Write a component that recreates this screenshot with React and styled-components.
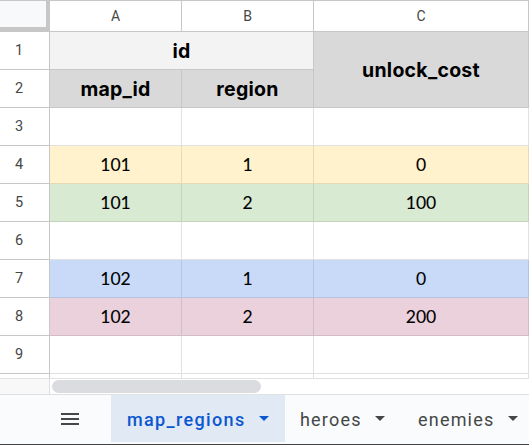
import React from "react";
import styled, { createGlobalStyle } from "styled-components";

const Global = createGlobalStyle`
  html, body {
    margin: 0;
    padding: 0;
    background: #fff;
    overflow: hidden;
  }
`;

const Page = styled.div`
  width: 529px;
  height: 445px;
  display: flex;
  flex-direction: column;
  overflow: hidden;
`;

const Grid = styled.div`
  display: grid;
  grid-template-columns: 50px 132px 132px 215px;
  grid-template-rows: 32px repeat(9, 38px) 4px;
  flex: none;
  border-bottom: 1px solid #e1e1e1;
`;

const Corner = styled.div`
  background: #f8f9fa;
  border-top: 1px solid #c7c7c7;
  border-right: 4px solid #c7c7c7;
  border-bottom: 5px solid #c7c7c7;
  box-sizing: border-box;
`;

const ColHead = styled.div`
  display: flex;
  align-items: center;
  justify-content: center;
  box-sizing: border-box;
  border-top: 1px solid #c7c7c7;
  border-right: 1px solid #c7c7c7;
  border-bottom: 1px solid #c7c7c7;
  font: 14px "Roboto", sans-serif;
  color: #444746;
  padding-bottom: 1px;
`;

const RowHead = styled.div`
  display: flex;
  align-items: center;
  justify-content: center;
  box-sizing: border-box;
  border-right: 1px solid #c7c7c7;
  border-bottom: 1px solid #c7c7c7;
  padding-right: 11px;
  font: 14.5px "Roboto", sans-serif;
  color: #444746;
`;

const Cell = styled.div`
  display: flex;
  align-items: center;
  justify-content: center;
  box-sizing: border-box;
  grid-row: ${(p) => p.$row || "auto"};
  grid-column: ${(p) => p.$col || "auto"};
  background: ${(p) => p.$bg || "#fff"};
  border-right: 1px solid ${(p) => p.$line || "#e1e1e1"};
  border-bottom: 1px solid ${(p) => p.$line || "#e1e1e1"};
  font-family: ${(p) => (p.$head ? '"Inter"' : '"Lato"')}, "Liberation Sans", sans-serif;
  font-size: ${(p) => (p.$head ? 19.5 : 17.5)}px;
  font-weight: ${(p) => (p.$head ? 700 : 400)};
  letter-spacing: ${(p) => (p.$head ? "0.25px" : "0")};
  -webkit-text-stroke: ${(p) => (p.$head ? "0" : "0.1px")} #000;
  color: #000;
`;

const Stub = styled.div`
  border-right: 1px solid ${(p) => (p.$first ? "#c7c7c7" : "#e1e1e1")};
  box-sizing: border-box;
`;

const ScrollStrip = styled.div`
  height: 15px;
  flex: none;
  display: flex;
  background: #fff;
`;

const ScrollCorner = styled.div`
  width: 50px;
  background: #f8f8f8;
  border-right: 1px solid #e1e1e1;
  box-sizing: border-box;
`;

const Thumb = styled.div`
  width: 209px;
  height: 13px;
  margin: 1px 0 0 2px;
  border-radius: 7px;
  background: #dadce0;
`;

const TabBar = styled.div`
  flex: 1;
  display: flex;
  background: #f9fbfd;
  border-top: 1px solid #e1e1e1;
  border-bottom: 1px solid #444;
  padding-bottom: 2px;
`;

const Menu = styled.div`
  width: 111px;
  flex: none;
  display: flex;
  align-items: center;
  padding-left: 61px;
  box-sizing: border-box;
`;

const Tab = styled.div`
  display: flex;
  align-items: center;
  flex: none;
  width: ${(p) => p.$w}px;
  padding-left: ${(p) => p.$pad}px;
  padding-top: 2px;
  box-sizing: border-box;
  background: ${(p) => (p.$active ? "#e1e9f5" : "transparent")};
  color: ${(p) => (p.$active ? "#0b57d0" : "#444746")};
  font-family: "Roboto", sans-serif;
  font-size: 18px;
  font-weight: ${(p) => (p.$active ? 500 : 400)};
  letter-spacing: ${(p) => (p.$active ? 1.35 : 1.2)}px;
  white-space: nowrap;
`;

const Caret = styled.span`
  width: 0;
  height: 0;
  margin-left: ${(p) => p.$gap}px;
  margin-top: -2px;
  flex: none;
  border-left: 5px solid transparent;
  border-right: 5px solid transparent;
  border-top: 5px solid currentColor;
`;

const rows = [
  { n: 3 },
  { n: 4, a: "101", b: "1", c: "0", bg: "#fff2cc", line: "#e6d9b8" },
  { n: 5, a: "101", b: "2", c: "100", bg: "#d9ead3", line: "#c3d3be" },
  { n: 6 },
  { n: 7, a: "102", b: "1", c: "0", bg: "#c9daf8", line: "#b5c4df" },
  { n: 8, a: "102", b: "2", c: "200", bg: "#ead1dc", line: "#d3bcc6" },
  { n: 9 },
];

export default function App() {
  return (
    <Page>
      <Global />
      <Grid>
        <Corner />
        <ColHead>A</ColHead>
        <ColHead>B</ColHead>
        <ColHead>C</ColHead>

        <RowHead>1</RowHead>
        <Cell $head $bg="#f3f3f3" $line="#c7c7c7" $col="span 2">id</Cell>
        <Cell $head $bg="#d9d9d9" $line="#c7c7c7" $row="span 2">unlock_cost</Cell>

        <RowHead>2</RowHead>
        <Cell $head $bg="#d9d9d9" $line="#c7c7c7">map_id</Cell>
        <Cell $head $bg="#d9d9d9" $line="#c7c7c7">region</Cell>

        {rows.map((r) => (
          <React.Fragment key={r.n}>
            <RowHead>{r.n}</RowHead>
            <Cell $bg={r.bg} $line={r.line}>{r.a}</Cell>
            <Cell $bg={r.bg} $line={r.line}>{r.b}</Cell>
            <Cell $bg={r.bg} $line={r.line}>{r.c}</Cell>
          </React.Fragment>
        ))}

        <Stub $first />
        <Stub />
        <Stub />
        <Stub />
      </Grid>

      <ScrollStrip>
        <ScrollCorner />
        <Thumb />
      </ScrollStrip>

      <TabBar>
        <Menu>
          <svg width="18" height="12" viewBox="0 0 18 12" fill="#444746">
            <rect x="0" y="0" width="18" height="2" />
            <rect x="0" y="5" width="18" height="2" />
            <rect x="0" y="10" width="18" height="2" />
          </svg>
        </Menu>
        <Tab $active $w={174} $pad={16}>map_regions<Caret $gap={13} /></Tab>
        <Tab $w={118} $pad={15}>heroes<Caret $gap={13} /></Tab>
        <Tab $w={126} $pad={15}>enemies<Caret $gap={14} /></Tab>
      </TabBar>
    </Page>
  );
}
